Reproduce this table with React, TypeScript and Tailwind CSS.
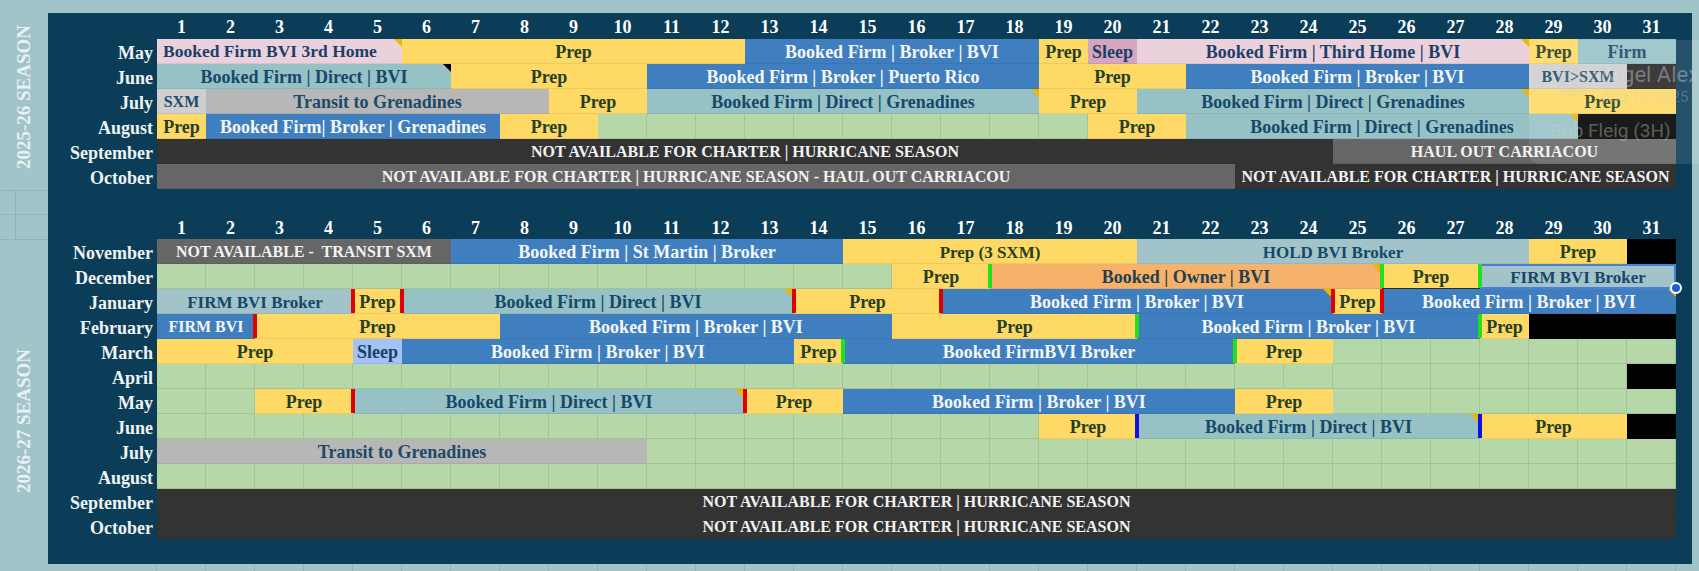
import React from "react";

type Seg = {
  s?: string;
  c?: string;
  t?: string;
  l?: boolean;
  u?: boolean;
  z?: string;
  tri?: "y" | "k";
  bl?: string;
  br?: string;
  x?: string;
  h?: boolean;
  e?: number;
};

const Y = "bg-[#ffd966] text-[#253f22]";
const B = "bg-[#3f7fbf] text-[#f4f6f8]";
const T = "bg-[#96c2c6] text-[#17486a]";
const T2 = "bg-[#a2c4c9] text-[#17486a]";
const P = "bg-[#ead1dc] text-[#1c3f68]";
const G = "bg-[#b7b7b7] text-[#1c4a66]";
const G2 = "bg-[#cfcfcf] text-[#1c4a66]";
const D = "bg-[#333333] text-[#f2f2f2]";
const M = "bg-[#666666] text-[#f2f2f2]";
const K = "bg-black";
const K2 = "bg-[#262626]";
const O = "bg-[#f6b26b] text-[#243f50]";
const SP = "bg-[#d5a6bd] text-[#1c3f68]";
const SB = "bg-[#a4c2f4] text-[#1c3f68]";

const RED = "bg-[#e00000]";
const GRN = "bg-[#22e01a]";
const BLU = "bg-[#1010e0]";

const S17 = "text-[17px]";

const HUR = "NOT AVAILABLE FOR CHARTER | HURRICANE SEASON";

const season1: [string, Seg[]][] = [
  [
    "May",
    [
      { s: "col-span-5", c: P, t: "Booked Firm BVI 3rd Home", l: true, tri: "y", z: "text-[17.5px]" },
      { s: "col-span-7", c: Y, t: "Prep" },
      { s: "col-span-6", c: B, t: "Booked Firm | Broker | BVI" },
      { s: "col-span-1", c: Y, t: "Prep" },
      { s: "col-span-1", c: SP, t: "Sleep" },
      { s: "col-span-8", c: P, t: "Booked Firm | Third Home | BVI", tri: "y" },
      { s: "col-span-1", c: Y, t: "Prep" },
      { s: "col-span-2", c: T, t: "Firm" },
    ],
  ],
  [
    "June",
    [
      { s: "col-span-6", c: T, t: "Booked Firm | Direct | BVI", tri: "k" },
      { s: "col-span-4", c: Y, t: "Prep" },
      { s: "col-span-8", c: B, t: "Booked Firm | Broker | Puerto Rico" },
      { s: "col-span-3", c: Y, t: "Prep" },
      { s: "col-span-7", c: B, t: "Booked Firm | Broker | BVI" },
      { s: "col-span-2", c: G2, t: "BVI>SXM", u: true },
      { s: "col-span-1", c: K2 },
    ],
  ],
  [
    "July",
    [
      { s: "col-span-1", c: G2, t: "SXM", u: true },
      { s: "col-span-7", c: G, t: "Transit to Grenadines" },
      { s: "col-span-2", c: Y, t: "Prep" },
      { s: "col-span-8", c: T, t: "Booked Firm | Direct | Grenadines", tri: "y" },
      { s: "col-span-2", c: Y, t: "Prep" },
      { s: "col-span-8", c: T, t: "Booked Firm | Direct | Grenadines", tri: "y" },
      { s: "col-span-3", c: Y, t: "Prep" },
    ],
  ],
  [
    "August",
    [
      { s: "col-span-1", c: Y, t: "Prep" },
      { s: "col-span-6", c: B, t: "Booked Firm| Broker | Grenadines" },
      { s: "col-span-2", c: Y, t: "Prep" },
      { e: 10 },
      { s: "col-span-2", c: Y, t: "Prep" },
      { s: "col-span-8", c: T, t: "Booked Firm | Direct | Grenadines", tri: "y" },
      { s: "col-span-2", c: K },
    ],
  ],
  [
    "September",
    [
      { s: "col-span-24", c: D, t: HUR, u: true },
      { s: "col-span-7", c: M, t: "HAUL OUT CARRIACOU", u: true },
    ],
  ],
  [
    "October",
    [
      { s: "col-span-22", c: M, t: "NOT AVAILABLE FOR CHARTER | HURRICANE SEASON - HAUL OUT CARRIACOU", u: true },
      { s: "col-span-9", c: D, t: HUR, u: true },
    ],
  ],
];

const season2: [string, Seg[]][] = [
  [
    "November",
    [
      { s: "col-span-6", c: M, t: "NOT AVAILABLE -  TRANSIT SXM", u: true },
      { s: "col-span-8", c: B, t: "Booked Firm | St Martin | Broker" },
      { s: "col-span-6", c: Y, t: "Prep (3 SXM)", z: S17 },
      { s: "col-span-8", c: T2, t: "HOLD BVI Broker", z: S17 },
      { s: "col-span-2", c: Y, t: "Prep" },
      { s: "col-span-1", c: K },
    ],
  ],
  [
    "December",
    [
      { e: 15 },
      { s: "col-span-2", c: Y, t: "Prep" },
      { s: "col-span-8", c: O, t: "Booked | Owner | BVI", tri: "y", bl: GRN, br: GRN },
      { s: "col-span-2", c: Y, t: "Prep", x: "border-b-[#2b2b2b]" },
      {
        s: "col-span-4",
        c: T2,
        t: "FIRM BVI Broker",
        z: S17,
        bl: GRN,
        h: true,
        x: "outline-2 outline-[#4a7fd8] -outline-offset-2",
      },
    ],
  ],
  [
    "January",
    [
      { s: "col-span-4", c: T2, t: "FIRM BVI Broker", z: S17 },
      { s: "col-span-1", c: Y, t: "Prep", bl: RED, br: RED },
      { s: "col-span-8", c: T, t: "Booked Firm | Direct | BVI", tri: "y", br: RED },
      { s: "col-span-3", c: Y, t: "Prep", br: RED },
      { s: "col-span-8", c: B, t: "Booked Firm | Broker | BVI", tri: "y", br: RED },
      { s: "col-span-1", c: Y, t: "Prep", br: RED },
      { s: "col-span-6", c: B, t: "Booked Firm | Broker | BVI", tri: "y" },
    ],
  ],
  [
    "February",
    [
      { s: "col-span-2", c: B, t: "FIRM BVI", u: true, br: RED },
      { s: "col-span-5", c: Y, t: "Prep" },
      { s: "col-span-8", c: B, t: "Booked Firm | Broker | BVI" },
      { s: "col-span-5", c: Y, t: "Prep", br: GRN },
      { s: "col-span-7", c: B, t: "Booked Firm | Broker | BVI" },
      { s: "col-span-1", c: Y, t: "Prep", bl: GRN },
      { s: "col-span-3", c: K },
    ],
  ],
  [
    "March",
    [
      { s: "col-span-4", c: Y, t: "Prep" },
      { s: "col-span-1", c: SB, t: "Sleep" },
      { s: "col-span-8", c: B, t: "Booked Firm | Broker | BVI" },
      { s: "col-span-1", c: Y, t: "Prep", br: GRN },
      { s: "col-span-8", c: B, t: "Booked FirmBVI Broker" },
      { s: "col-span-2", c: Y, t: "Prep", bl: GRN },
      { e: 7 },
    ],
  ],
  ["April", [{ e: 30 }, { s: "col-span-1", c: K }]],
  [
    "May",
    [
      { e: 2 },
      { s: "col-span-2", c: Y, t: "Prep", br: RED },
      { s: "col-span-8", c: T, t: "Booked Firm | Direct | BVI", tri: "y", br: RED },
      { s: "col-span-2", c: Y, t: "Prep" },
      { s: "col-span-8", c: B, t: "Booked Firm | Broker | BVI" },
      { s: "col-span-2", c: Y, t: "Prep" },
      { e: 7 },
    ],
  ],
  [
    "June",
    [
      { e: 18 },
      { s: "col-span-2", c: Y, t: "Prep", br: BLU },
      { s: "col-span-7", c: T, t: "Booked Firm | Direct | BVI", tri: "y", br: BLU },
      { s: "col-span-3", c: Y, t: "Prep" },
      { s: "col-span-1", c: K },
    ],
  ],
  ["July", [{ s: "col-span-10", c: G, t: "Transit to Grenadines" }, { e: 21 }]],
  ["August", [{ e: 31 }]],
  ["September", [{ s: "col-span-31", c: D, t: HUR, u: true }]],
  ["October", [{ s: "col-span-31", c: D, t: HUR, u: true }]],
];

const DAYS = Array.from({ length: 31 }, (_, i) => i + 1);

function Cell({ seg }: { seg: Seg }) {
  const size = seg.z ?? (seg.u ? "text-[16px]" : "text-[18px]");
  const align = seg.l ? "justify-start pl-[6px]" : "justify-center";
  return (
    <div
      className={`relative flex items-center pt-[2px] border-b border-black/[0.07] ${seg.s ?? ""} ${seg.c ?? ""} ${align} ${seg.x ?? ""}`}
    >
      {seg.t && <span className={`whitespace-pre leading-none ${size}`}>{seg.t}</span>}
      {seg.tri && (
        <span
          className={`absolute top-0 ${seg.br ? "right-[2px]" : "right-0"} w-0 h-0 border-l-[8px] border-l-transparent border-t-[8px] ${
            seg.tri === "k" ? "border-t-black" : "border-t-[#f2b400]"
          }`}
        />
      )}
      {seg.bl && <span className={`absolute top-0 bottom-0 -left-[2px] w-[4px] z-10 ${seg.bl}`} />}
      {seg.br && <span className={`absolute top-0 bottom-0 -right-[2px] w-[4px] z-10 ${seg.br}`} />}
      {seg.h && (
        <span className="absolute -right-[6px] -bottom-[6px] w-[12px] h-[12px] rounded-full bg-[#1a5fd0] border-2 border-white z-20" />
      )}
    </div>
  );
}

function Row({ month, segs }: { month: string; segs: Seg[] }) {
  const cells: React.ReactNode[] = [];
  segs.forEach((seg, i) => {
    if (seg.e) {
      for (let k = 0; k < seg.e; k++) {
        cells.push(
          <div key={`${i}-${k}`} className="col-span-1 bg-[#b6d7a8] border-r border-b border-[#a2c394]" />
        );
      }
    } else {
      cells.push(<Cell key={i} seg={seg} />);
    }
  });
  return (
    <div className="flex h-[25px]">
      <div className="w-[109px] shrink-0 pr-[4px] pt-[2px] text-right text-[18px] leading-[25px] text-[#eef3f4]">
        {month}
      </div>
      <div className="grid grid-cols-[repeat(31,49px)] h-[25px]">{cells}</div>
    </div>
  );
}

function DayHeader({ h }: { h: string }) {
  return (
    <div className={`flex ${h}`}>
      <div className="w-[109px] shrink-0" />
      <div className="grid grid-cols-[repeat(31,49px)]">
        {DAYS.map((d) => (
          <div key={d} className="flex items-center justify-center pt-[2px] text-[18px] leading-none text-white">
            {d}
          </div>
        ))}
      </div>
    </div>
  );
}

export default function App() {
  return (
    <div className="relative flex w-[1699px] h-[571px] overflow-hidden bg-[#a0c4c8] font-['Liberation_Serif',serif] font-bold">
      {/* left strip */}
      <div className="flex w-[48px] shrink-0 flex-col">
        <div className="flex h-[190px] items-center justify-center pt-[4px]">
          <span className="[writing-mode:vertical-rl] rotate-180 whitespace-nowrap text-[19px] text-[#e9f1f2]">
            2025-26 SEASON
          </span>
        </div>
        <div className="flex h-[24px] border-t border-[#8fb4b9]">
          <div className="w-[16px] border-r border-[#8fb4b9]" />
        </div>
        <div className="flex h-[26px] border-t border-b border-[#8fb4b9]">
          <div className="w-[16px] border-r border-[#8fb4b9]" />
        </div>
        <div className="flex flex-1 justify-center pt-[109px]">
          <span className="h-fit [writing-mode:vertical-rl] rotate-180 whitespace-nowrap text-[19px] text-[#e9f1f2]">
            2026-27 SEASON
          </span>
        </div>
      </div>

      {/* main */}
      <div className="flex flex-col">
        <div className="h-[13px]" />
        <div className="flex h-[551px] w-[1644px] flex-col bg-[#0c3d58]">
          <DayHeader h="h-[26px]" />
          {season1.map(([m, segs], i) => (
            <Row key={`a${i}`} month={m} segs={segs} />
          ))}
          <div className="h-[25px]" />
          <DayHeader h="h-[25px]" />
          {season2.map(([m, segs], i) => (
            <Row key={`b${i}`} month={m} segs={segs} />
          ))}
        </div>
        <div className="flex h-[7px]">
          <div className="w-[109px] shrink-0 border-r border-[#8fb4b9]" />
          {DAYS.map((d) => (
            <div key={d} className="w-[49px] shrink-0 border-r border-[#8fb4b9]" />
          ))}
        </div>
      </div>

      {/* floating comment card (faded) */}
      <div className="absolute left-[1529px] top-[40px] z-30 h-[124px] w-[200px] rounded-[10px] bg-white/10 font-['Roboto',sans-serif] font-normal">
        <div className="flex items-start gap-[14px] pl-[28px] pt-[22px]">
          <div className="mt-[6px] h-[30px] w-[30px] shrink-0 rounded-full bg-[rgba(200,200,200,0.12)]" />
          <div className="flex flex-col">
            <span className="whitespace-nowrap text-[22px] leading-[26px] text-[rgba(205,205,205,0.45)]">Nigel Alexander</span>
            <span className="whitespace-nowrap text-[15px] leading-[18px] text-[rgba(205,205,205,0.3)]">Aug 19, 2025</span>
          </div>
        </div>
        <div className="mt-[14px] pl-[21px] whitespace-nowrap text-[19px] leading-[22px] text-[rgba(205,205,205,0.4)]">
          Bob Fleig (3H)
        </div>
      </div>
    </div>
  );
}
